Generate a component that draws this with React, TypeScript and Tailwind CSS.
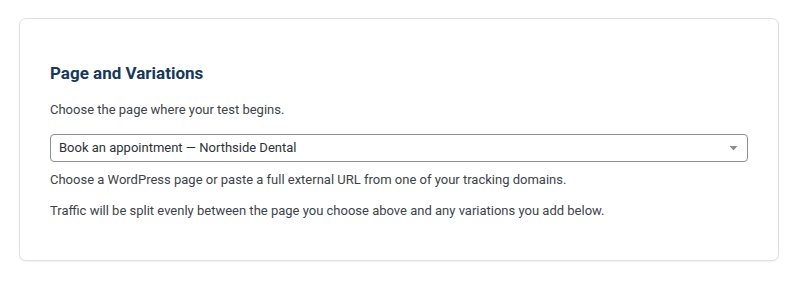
export default function App() {
  return (
    <div className="min-h-[281px] bg-white px-[19px] pt-[18px] font-['Roboto',sans-serif]">
      <div className="w-[760px] rounded-[7px] border border-[#e0e0e0] bg-white px-[30px] pt-[42px] pb-[39px] shadow-[0_1px_2px_rgba(0,0,0,0.06)]">
        <h2 className="text-[17px] leading-[24px] font-bold text-[#17385a]">Page and Variations</h2>
        <p className="mt-[15px] text-[13px] leading-[20px] text-[#3c434a]">
          Choose the page where your test begins.
        </p>
        <div className="mt-[14px] flex h-[28px] w-[698px] items-center justify-between rounded-[4px] border border-[#8c8f94] bg-white pl-[8px] pr-[9px]">
          <span className="text-[13px] text-[#2c3338]">Book an appointment — Northside Dental</span>
          <svg width="9" height="6" viewBox="0 0 9 6">
            <path d="M0.5 1 L8.5 1 L4.5 5.5 Z" fill="#8c8f94" />
          </svg>
        </div>
        <p className="mt-[8px] text-[13px] leading-[20px] text-[#3c434a]">
          Choose a WordPress page or paste a full external URL from one of your tracking domains.
        </p>
        <p className="mt-[11px] text-[13px] leading-[20px] text-[#3c434a]">
          Traffic will be split evenly between the page you choose above and any variations you add below.
        </p>
      </div>
    </div>
  )
}
